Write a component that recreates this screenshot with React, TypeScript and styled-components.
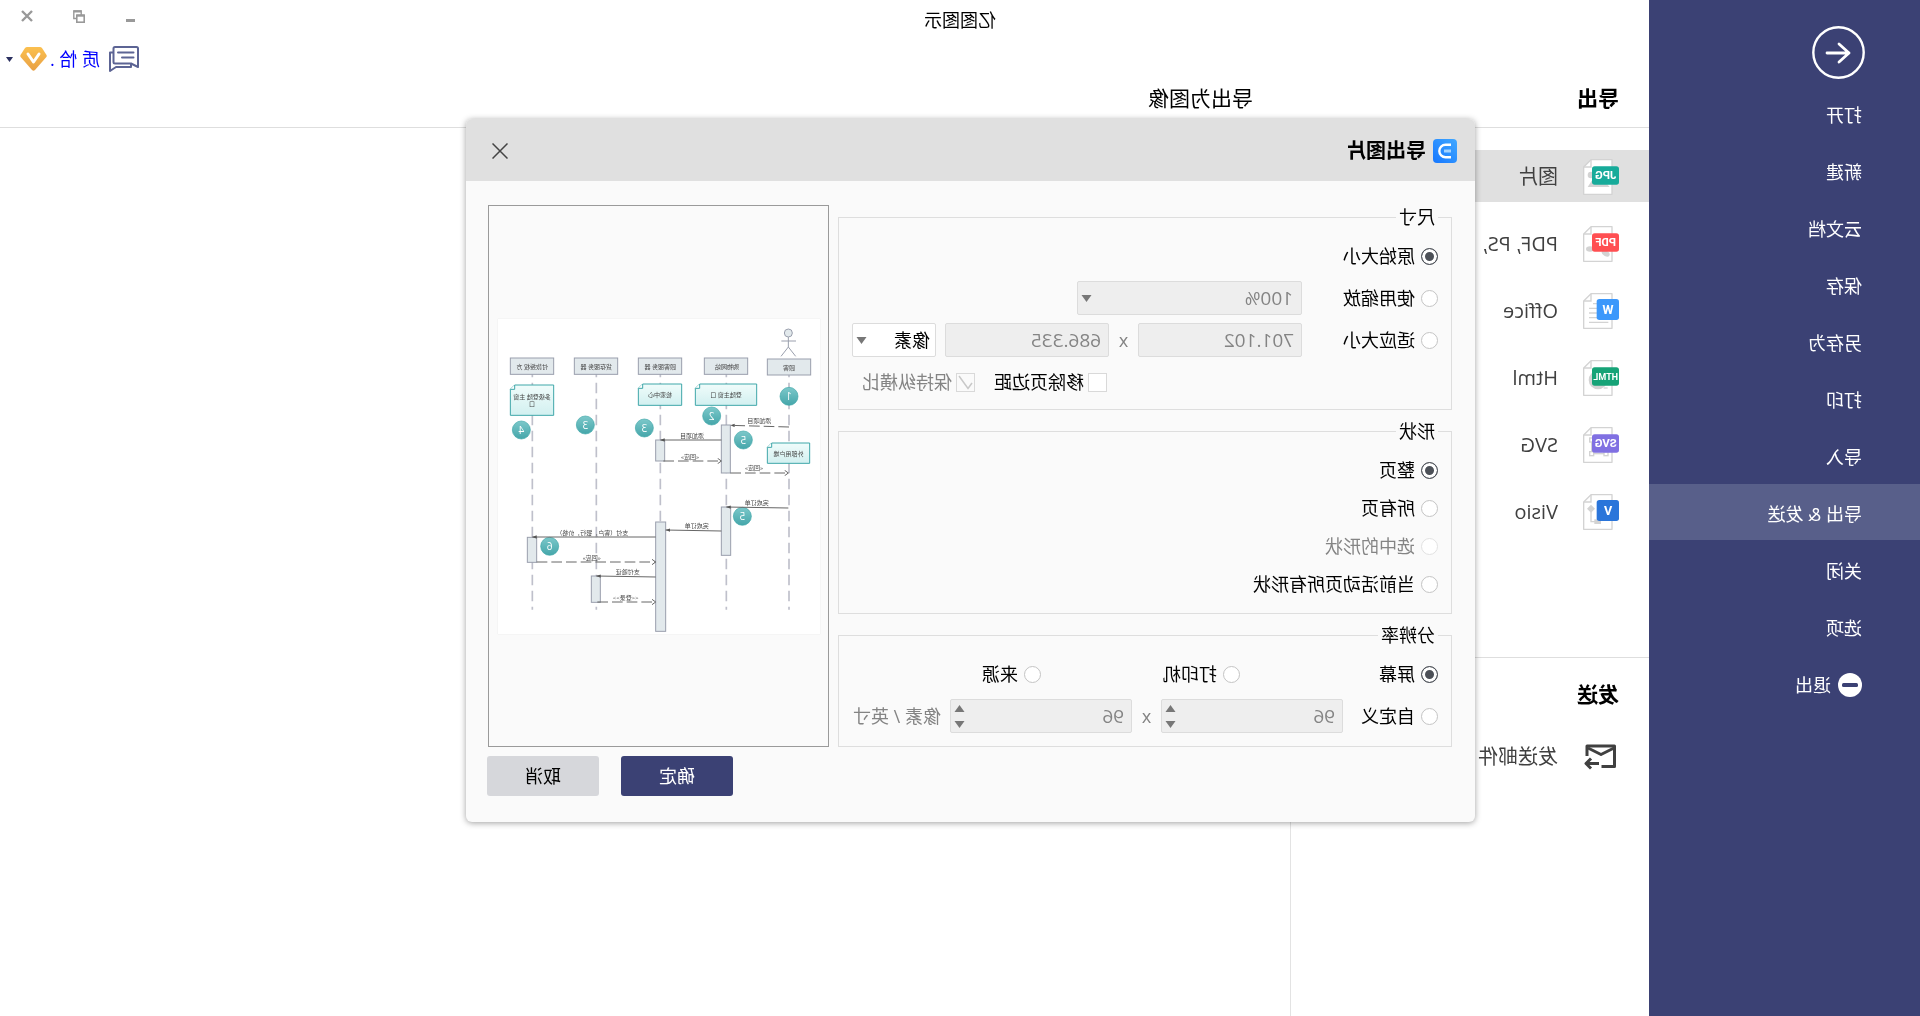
import React from "react";
import styled, { createGlobalStyle } from "styled-components";

const sans = `"Open Sans", "Noto Sans CJK SC", sans-serif`;

const Global = createGlobalStyle`
  * { box-sizing: border-box; }
  body { margin: 0; background: #fff; font-family: ${sans}; font-size: 18px; line-height: 24px; color: #000; }
  button, input, select { font: inherit; color: inherit; margin: 0; }
  button { border: 0; padding: 0; background: none; cursor: pointer; }
  h1, h2, p { margin: 0; font-size: inherit; font-weight: inherit; }
  svg { display: block; flex: none; }
`;

/* The whole window is shown as a mirror image. */
const Window = styled.div`
  position: relative;
  display: flex;
  min-height: 100vh;
  overflow: hidden;
  transform: scaleX(-1);
`;

/* ---------- sidebar ---------- */
const Sidebar = styled.nav`
  flex: none;
  width: 271px;
  background: #3b4174;
  color: #fff;
`;
const BackButton = styled.button`
  display: block;
  margin: 26px 0 6px 55px;
  color: #fff;
`;
const MenuItem = styled.a<{ $active?: boolean }>`
  display: flex;
  align-items: center;
  gap: 7px;
  height: 56px;
  margin-bottom: 1px;
  padding: 4px 0 0 58px;
  color: #fff;
  text-decoration: none;
  background: ${(p) => (p.$active ? "#585f8a" : "transparent")};
`;

/* ---------- main area ---------- */
const Main = styled.main`
  flex: 1;
  min-width: 0;
  display: flex;
  flex-direction: column;
`;
const TopBar = styled.header`
  display: flex;
  height: 78px;
`;
const AppTitle = styled.h1`
  flex: 1;
  padding: 8px 121px 0 0;
  text-align: center;
`;
const Tools = styled.div`
  width: 150px;
  display: flex;
  flex-direction: column;
  gap: 12px;
`;
const WindowButtons = styled.div`
  display: flex;
  justify-content: space-between;
  height: 32px;
  padding: 0 18px 0 10px;
  color: #999;
`;
const IconButton = styled.button`
  display: flex;
  align-items: center;
  justify-content: center;
  width: 18px;
  color: inherit;
`;
const Account = styled.div`
  display: flex;
  align-items: center;
  height: 30px;
  padding: 0 6px 0 11px;
`;
const AccountLink = styled.a`
  flex: 1;
  min-width: 0;
  padding-left: 9px;
  color: #0000ff;
  text-decoration: none;
  white-space: nowrap;
`;
const VipMark = styled.span`
  margin-right: 7px;
`;
const Headings = styled.div`
  display: flex;
  height: 50px;
  padding: 6px 0 0 30px;
  border-bottom: 1px solid #dedede;
  font-size: 21px;
  line-height: 28px;
`;
const ColumnTitle = styled.h2<{ $bold?: boolean }>`
  width: 366px;
  font-weight: ${(p) => (p.$bold ? 700 : 400)};
`;
const Content = styled.div`
  flex: 1;
  display: flex;
`;
const Formats = styled.section`
  width: 359px;
  border-right: 1px solid #e3e3e3;
  padding-top: 22px;
`;
const FormatItem = styled.a<{ $active?: boolean }>`
  display: flex;
  align-items: center;
  gap: 25px;
  height: 52px;
  margin-bottom: 15px;
  padding: 1px 0 0 30px;
  font-size: 20px;
  color: #404040;
  text-decoration: none;
  white-space: nowrap;
  background: ${(p) => (p.$active ? "#e0e0e0" : "transparent")};
`;
const SendGroup = styled.div`
  margin-top: 120px;
  border-top: 1px solid #dedede;
`;
const SendTitle = styled.h2`
  padding: 22px 0 22px 30px;
  font-size: 21px;
  line-height: 28px;
  font-weight: 700;
`;

/* ---------- dialog ---------- */
const Overlay = styled.div`
  position: absolute;
  inset: 0;
  display: flex;
  justify-content: center;
  align-items: flex-start;
  padding: 119px 21px 0 0;
`;
const Dialog = styled.section`
  width: 1009px;
  border-radius: 6px;
  background: #fafafa;
  box-shadow: 0 1px 6px rgba(0, 0, 0, 0.38);
`;
const DialogHead = styled.header`
  display: flex;
  align-items: center;
  gap: 7px;
  height: 62px;
  padding: 1px 25px 0 18px;
  border-radius: 6px 6px 0 0;
  background: #e0e0e0;
`;
const DialogTitle = styled.h2`
  flex: 1;
  font-size: 20px;
  font-weight: 700;
`;
const Body = styled.div`
  display: flex;
  gap: 9px;
  padding: 24px 22px 0 23px;
`;
const Groups = styled.div`
  flex: 1;
  display: flex;
  flex-direction: column;
  gap: 9px;
`;
const Group = styled.fieldset<{ $gap: number; $bottom: number }>`
  margin: 0;
  min-width: 0;
  border: 1px solid #dedede;
  padding: 10px 13px ${(p) => p.$bottom}px;
  display: flex;
  flex-direction: column;
  gap: ${(p) => p.$gap}px;
`;
const Legend = styled.legend`
  padding: 0 3px;
`;
const Row = styled.div<{ $indent?: number }>`
  display: flex;
  align-items: center;
  height: 34px;
  padding-left: ${(p) => p.$indent ?? 0}px;
`;
const Choice = styled.label<{ $width?: number; $off?: boolean }>`
  display: flex;
  align-items: center;
  gap: 6px;
  flex: none;
  width: ${(p) => (p.$width ? `${p.$width}px` : "auto")};
  color: ${(p) => (p.$off ? "#848484" : "#000")};
  white-space: nowrap;
`;
const Radio = styled.input`
  appearance: none;
  flex: none;
  width: 17px;
  height: 17px;
  border: 1px solid #c4c4c4;
  border-radius: 50%;
  background: #fff;
  &:checked {
    border-color: #4d5158;
    background: #4d5158;
    box-shadow: inset 0 0 0 3px #fff;
  }
  &:disabled { border-color: #e2e2e2; }
`;
const CheckHolder = styled.span`
  display: grid;
  margin-right: -2px;
  > * { grid-area: 1 / 1; }
  > svg { pointer-events: none; }
`;
const Check = styled.input`
  appearance: none;
  width: 19px;
  height: 19px;
  border: 1px solid #d9d9d9;
  background: #fff;
  &:disabled { background: #fafafa; }
`;
const Field = styled.div<{ $width: number }>`
  display: grid;
  align-items: center;
  width: ${(p) => p.$width}px;
  height: 34px;
  > * { grid-area: 1 / 1; }
`;
const control = `
  appearance: none;
  width: 100%;
  height: 34px;
  min-width: 0;
  border: 1px solid #dcdcdc;
  border-radius: 2px;
  background: #fff;
  opacity: 1;
`;
const Picker = styled.select`
  ${control}
  padding: 0 24px 0 5px;
  &:disabled { background: #eee; color: #848484; font-size: 19px; padding-left: 8px; }
`;
const TextBox = styled.input`
  ${control}
  padding: 0 24px 0 7px;
  font-size: 19px;
  &:disabled { background: #eee; color: #848484; }
  &::-webkit-inner-spin-button { display: none; }
`;
const Arrows = styled.span`
  justify-self: end;
  display: flex;
  flex-direction: column;
  gap: 9px;
  margin-right: 4px;
  pointer-events: none;
`;
const Times = styled.span<{ $width: number }>`
  width: ${(p) => p.$width}px;
  text-align: center;
  color: #848484;
`;
const Unit = styled.span`
  margin-left: 9px;
  color: #848484;
`;
const UnitHolder = styled.div`
  margin-left: 9px;
`;
const Preview = styled.div`
  flex: none;
  width: 341px;
  display: flex;
  align-items: center;
  justify-content: center;
  padding-right: 2px;
  border: 1px solid #9a9a9a;
`;
const Paper = styled.svg`
  width: 322px;
  height: 315px;
  background: #fff;
  box-shadow: 0 0 1px #ddd;
`;
const Footer = styled.footer`
  display: flex;
  justify-content: flex-end;
  gap: 22px;
  padding: 9px 21px 26px;
`;
const Button = styled.button<{ $primary?: boolean }>`
  width: 112px;
  height: 40px;
  border-radius: 3px;
  background: ${(p) => (p.$primary ? "#3b4174" : "#d6d7db")};
  color: ${(p) => (p.$primary ? "#fff" : "#000")};
`;

/* ---------- drawings ---------- */
const Triangle = ({ up = false, color = "#777" }) => (
  <svg width="11" height="7" viewBox="0 0 11 7">
    <path d={up ? "M0.5 7 L5.5 0 L10.5 7 Z" : "M0.5 0 L5.5 7 L10.5 0 Z"} fill={color} />
  </svg>
);

type Format = { name: string; badge: string; color: string; wide: boolean; art: React.ReactNode };

const FileIcon = ({ badge, color, wide, art }: Format) => (
  <svg width="36" height="36" viewBox="0 0 108 108">
    <path d="M21 2 H84 L106 24 V106 H21 Z" fill="#fff" stroke="#d3d3d3" strokeWidth="4" strokeLinejoin="round" />
    <path d="M84 3 V24 H105" fill="none" stroke="#d3d3d3" strokeWidth="4" />
    {art}
    <rect x="0" y={wide ? 22 : 18} width={wide ? 81 : 67} height={wide ? 55 : 63} rx="8" fill={color} />
    <text
      x={wide ? 40 : 33}
      y={wide ? (badge.length > 3 ? 59 : 61) : 63}
      textAnchor="middle"
      fontFamily="Roboto, sans-serif"
      fontWeight="700"
      fontSize={wide ? (badge.length > 3 ? 27 : 34) : 38}
      fill="#fff"
    >
      {badge}
    </text>
  </svg>
);

const formats: Format[] = [
  {
    name: "图片", badge: "JPG", color: "#17ab9a", wide: true,
    art: <g fill="#d3d3d3"><circle cx="84" cy="48" r="10" /><path d="M28 84 L55 52 L72 70 L80 62 L94 84 Z" /></g>,
  },
  {
    name: "PDF, PS,", badge: "PDF", color: "#ff4f52", wide: true,
    art: <g fill="#d3d3d3"><ellipse cx="87" cy="69" rx="12" ry="8" /><ellipse cx="40" cy="82" rx="13" ry="8" transform="rotate(-30 40 82)" /></g>,
  },
  {
    name: "Office", badge: "W", color: "#3c98fb", wide: false,
    art: <path d="M32 88 H90 M32 74 H90 M50 60 H90 M50 46 H90 M50 32 H78" stroke="#d3d3d3" strokeWidth="4" />,
  },
  {
    name: "Html", badge: "HTML", color: "#16a377", wide: true,
    art: <g><circle cx="63" cy="60" r="28" fill="#d3d3d3" /><path d="M34 84 H46" stroke="#d3d3d3" strokeWidth="4" /></g>,
  },
  {
    name: "SVG", badge: "SVG", color: "#8070e2", wide: true,
    art: <g fill="none" stroke="#d3d3d3" strokeWidth="4"><rect x="36" y="38" width="46" height="42" /><rect x="76" y="33" width="12" height="12" fill="#fff" /><rect x="76" y="74" width="12" height="12" fill="#fff" /><rect x="33" y="74" width="12" height="12" fill="#fff" /></g>,
  },
  {
    name: "Visio", badge: "V", color: "#2a75da", wide: false,
    art: <g fill="#d3d3d3"><path d="M84 32 L96 44 L84 56 L72 44 Z" /><rect x="54" y="76" width="20" height="14" /><path d="M84 50 V83 H70" fill="none" stroke="#d3d3d3" strokeWidth="4" /></g>,
  },
];

const Label = styled.text`
  font-family: ${sans};
  font-size: 18px;
  font-variant-ligatures: none;
  text-anchor: middle;
  fill: #444;
`;
const Box = ({ x, y, w, h }: { x: number; y: number; w: number; h: number }) => (
  <rect x={x} y={y} width={w} height={h} fill="#e2e9ec" stroke="#9a9fad" strokeWidth="3" />
);
const Words = ({ x, y, children }: { x: number; y: number; children: string }) => (
  <Label x={x} y={y + 7}>{children}</Label>
);
const Note = ({ x, y, w, h, lines }: { x: number; y: number; w: number; h: number; lines: string[] }) => (
  <g>
    <path d={`M${x} ${y} H${x + w - 13} L${x + w} ${y + 13} V${y + h} H${x} Z`} fill="url(#note)" stroke="#3fa7a9" strokeWidth="3" />
    <path d={`M${x + w - 13} ${y} V${y + 13} H${x + w}`} fill="#fff" stroke="#3fa7a9" strokeWidth="3" />
    {lines.map((line, i) => (
      <Words key={line} x={x + w / 2} y={y + h / 2 + (i - (lines.length - 1) / 2) * 20}>{line}</Words>
    ))}
  </g>
);
const Step = ({ x, y, n }: { x: number; y: number; n: number }) => (
  <g>
    <circle cx={x} cy={y} r="27" fill="url(#step)" stroke="#3fa7a9" strokeWidth="2" />
    <text x={x} y={y + 11} fontSize="30" textAnchor="middle" fill="#fff" fontFamily={sans}>{n}</text>
  </g>
);
const Call = ({ x1, y1, x2, y2, dashed = false }: { x1: number; y1: number; x2: number; y2: number; dashed?: boolean }) => (
  <line x1={x1} y1={y1} x2={x2} y2={y2} stroke="#666" strokeWidth="3" strokeDasharray={dashed ? "32 12" : undefined} markerEnd="url(#solid)" />
);
const Reply = ({ x1, x2, y }: { x1: number; x2: number; y: number }) => (
  <line x1={x1} y1={y} x2={x2} y2={y} stroke="#666" strokeWidth="3" strokeDasharray="32 12" markerEnd="url(#open)" />
);

const Diagram = () => (
  <Paper viewBox="0 0 966 945" role="img" aria-label="时序图">
    <defs>
      <linearGradient id="note" x1="0" y1="0" x2="0" y2="1"><stop offset="0" stopColor="#f0fcfb" /><stop offset="1" stopColor="#d2f0f0" /></linearGradient>
      <linearGradient id="step" x1="0" y1="0" x2="0" y2="1"><stop offset="0" stopColor="#7cc8ca" /><stop offset="1" stopColor="#45a6aa" /></linearGradient>
      <marker id="solid" markerUnits="userSpaceOnUse" markerWidth="14" markerHeight="12" refX="13" refY="6" orient="auto"><path d="M0 1 L13 6 L0 11 Z" fill="#555" /></marker>
      <marker id="open" markerUnits="userSpaceOnUse" markerWidth="16" markerHeight="20" refX="13" refY="10" orient="auto"><path d="M2 2 L13 10 L2 18" fill="none" stroke="#666" strokeWidth="3" /></marker>
    </defs>
    {[93, 281, 479, 671, 863].map((x) => (
      <line key={x} x1={x} x2={x} y1="143" y2="872" stroke="#bfc0cb" strokeWidth="5" strokeDasharray="32 16" />
    ))}
    <g fill="none" stroke="#9a9fad" strokeWidth="3">
      <circle cx="95" cy="42" r="12" fill="#e2e9ec" />
      <path d="M95 54 V84 M72 66 H116 M95 84 L73 112 M95 84 L117 112" />
    </g>
    <Box x={28} y={120} w={130} h={48} /><Words x={93} y={146}>顾客</Words>
    <Box x={217} y={117} w={130} h={49} /><Words x={279} y={143}>购物网站</Words>
    <Box x={415} y={117} w={130} h={49} /><Words x={479} y={143}>顾客服务 器</Words>
    <Box x={607} y={117} w={130} h={49} /><Words x={671} y={143}>货存服务 器</Words>
    <Box x={799} y={117} w={130} h={49} /><Words x={863} y={143}>付款授权 方</Words>
    <Box x={269} y={318} w={27} h={144} />
    <Box x={466} y={363} w={27} h={63} />
    <Box x={268} y={564} w={28} h={145} />
    <Box x={463} y={609} w={30} h={328} />
    <Box x={850} y={655} w={28} h={75} />
    <Box x={659} y={771} w={27} h={79} />
    <Note x={190} y={195} w={184} h={64} lines={["登陆主窗 口"]} />
    <Note x={415} y={195} w={130} h={64} lines={["检索中心"]} />
    <Note x={799} y={198} w={130} h={91} lines={["多级登陆 主窗", "口"]} />
    <Note x={31} y={372} w={127} h={61} lines={["外部用户端"]} />
    <Step x={93} y={232} n={1} />
    <Step x={325} y={291} n={2} />
    <Step x={230} y={363} n={5} />
    <Step x={527} y={327} n={3} />
    <Step x={704} y={318} n={3} />
    <Step x={896} y={333} n={4} />
    <Step x={233} y={592} n={5} />
    <Step x={811} y={682} n={6} />
    <Call x1={93} y1={324} x2={269} y2={319} dashed />
    <Call x1={296} y1={363} x2={479} y2={363} />
    <Reply x1={470} x2={296} y={426} />
    <Reply x1={269} x2={95} y={462} />
    <Call x1={95} y1={567} x2={281} y2={564} />
    <Call x1={296} y1={636} x2={463} y2={633} />
    <Call x1={493} y1={654} x2={863} y2={654} />
    <Reply x1={850} x2={493} y={729} />
    <Call x1={493} y1={774} x2={671} y2={771} />
    <Reply x1={668} x2={493} y={849} />
    <Words x={182} y={304}>添加项目</Words>
    <Words x={384} y={349}>添加项目</Words>
    <Words x={390} y={413}>«回应»</Words>
    <Words x={198} y={446}>«回应»</Words>
    <Words x={190} y={551}>完成订单</Words>
    <Words x={370} y={620}>完成订单</Words>
    <Words x={683} y={640}>支付（客户，银行，价格）</Words>
    <Words x={685} y={717}>«回应»</Words>
    <Words x={577} y={757}>支付验证</Words>
    <Words x={583} y={835}>{"<<登录>>"}</Words>
  </Paper>
);

const menu = ["打开", "新建", "云文档", "保存", "另存为", "打印", "导入", "导出 & 发送", "关闭", "选项"];

export default function App() {
  return (
    <>
      <Global />
      <Window>
        <Sidebar>
          <BackButton aria-label="返回">
            <svg width="53" height="53" viewBox="0 0 53 53" fill="none" stroke="currentColor" strokeLinecap="round" strokeLinejoin="round">
              <circle cx="26.5" cy="26.5" r="25.2" strokeWidth="2.4" />
              <path d="M38 27 H16 M26 18 L16 27 L26 36" strokeWidth="2.8" />
            </svg>
          </BackButton>
          {menu.map((name) => (
            <MenuItem key={name} href="#" $active={name.includes("&")}>{name}</MenuItem>
          ))}
          <MenuItem href="#">
            <svg width="24" height="24" viewBox="0 0 24 24">
              <circle cx="12" cy="12" r="12" fill="#fff" />
              <rect x="4" y="10" width="16" height="4" rx="1.5" fill="#3b4174" />
            </svg>
            退出
          </MenuItem>
        </Sidebar>

        <Main>
          <TopBar>
            <AppTitle>亿图图示</AppTitle>
            <Tools>
              <WindowButtons>
                <IconButton aria-label="最小化">
                  <svg width="9" height="13" viewBox="0 0 9 13"><rect y="9" width="9" height="3" fill="currentColor" /></svg>
                </IconButton>
                <IconButton aria-label="还原">
                  <svg width="12" height="13" viewBox="0 0 12 13" fill="none" stroke="currentColor">
                    <path d="M3.5 8.5 H11.2 V1 H3.8 V5" strokeWidth="1.4" />
                    <path d="M3.5 1.4 H11.5" strokeWidth="2.2" />
                    <rect x="0.8" y="5.2" width="7.4" height="7" strokeWidth="1.6" fill="#fff" />
                    <path d="M0.5 5.6 H8.5" strokeWidth="2.2" />
                  </svg>
                </IconButton>
                <IconButton aria-label="关闭窗口">
                  <svg width="12" height="12" viewBox="0 0 12 12" stroke="currentColor" strokeWidth="2.4"><path d="M1 1 L11 11 M11 1 L1 11" /></svg>
                </IconButton>
              </WindowButtons>
              <Account>
                <svg width="30" height="26" viewBox="0 0 30 26" fill="none" stroke="#5c6494" strokeWidth="2" strokeLinejoin="round" strokeLinecap="round">
                  <path d="M2.5 1 H24 a1.5 1.5 0 0 1 1.5 1.5 V16 a1.5 1.5 0 0 1 -1.5 1.5 H8 L1 21 V2.5 A1.5 1.5 0 0 1 2.5 1 Z" />
                  <path d="M26 6.5 H29 V25 L23 21 H8 V18 M5.5 6.5 H21 M5.5 11.5 H17" />
                </svg>
                <AccountLink href="#">质 恰 .</AccountLink>
                <VipMark>
                  <svg width="27" height="24" viewBox="0 0 27 24">
                    <defs><linearGradient id="vip" x1="0" y1="0" x2="0" y2="1"><stop offset="0" stopColor="#fbc04f" /><stop offset="1" stopColor="#e8a045" /></linearGradient></defs>
                    <path d="M7 0 H20 Q21 0 22 1 L26.5 8 Q27 9 26.4 10 L15 23 Q13.5 24.6 12 23 L0.6 10 Q0 9 0.5 8 L5 1 Q6 0 7 0 Z" fill="url(#vip)" />
                    <path d="M8 7 L13.5 15 L19 7" fill="none" stroke="#fff" strokeWidth="3" strokeLinecap="round" strokeLinejoin="round" />
                  </svg>
                </VipMark>
                <svg width="7" height="5" viewBox="0 0 7 5"><path d="M0 0 H7 L3.5 5 Z" fill="#2b3060" /></svg>
              </Account>
            </Tools>
          </TopBar>
          <Headings>
            <ColumnTitle $bold>导出</ColumnTitle>
            <ColumnTitle>导出为图像</ColumnTitle>
          </Headings>
          <Content>
            <Formats>
              {formats.map((f, i) => (
                <FormatItem key={f.name} href="#" $active={i === 0}>
                  <FileIcon {...f} />
                  {f.name}
                </FormatItem>
              ))}
              <SendGroup>
                <SendTitle>发送</SendTitle>
                <FormatItem href="#">
                  <svg width="36" height="26" viewBox="0 0 36 26" fill="none" stroke="#404040" strokeWidth="3" strokeLinejoin="round">
                    <path d="M17.5 22.5 H4.5 V2 H32 V12" />
                    <path d="M5 4 L18 10.5 L31 4" />
                    <path d="M20 19.5 H32 M28 14.5 L33 19.5 L28 24.5" />
                  </svg>
                  发送邮件
                </FormatItem>
              </SendGroup>
            </Formats>
          </Content>
        </Main>

        <Overlay>
          <Dialog role="dialog" aria-label="导出图片">
            <DialogHead>
              <svg width="24" height="24" viewBox="0 0 24 24">
                <defs><linearGradient id="logo" x1="0" y1="0" x2="1" y2="1"><stop offset="0" stopColor="#41a8ff" /><stop offset="1" stopColor="#1677ff" /></linearGradient></defs>
                <rect width="24" height="24" rx="4" fill="url(#logo)" />
                <path d="M6 5.8 H11.5 A6.2 6.2 0 0 1 11.5 18.2 H6" fill="none" stroke="#fff" strokeWidth="2.4" />
                <path d="M6 12 H13" stroke="#a5d4ff" strokeWidth="3" />
              </svg>
              <DialogTitle>导出图片</DialogTitle>
              <IconButton aria-label="关闭">
                <svg width="16" height="16" viewBox="0 0 16 16" stroke="#444" strokeWidth="1.5"><path d="M0.5 0.5 L15.5 15.5 M15.5 0.5 L0.5 15.5" /></svg>
              </IconButton>
            </DialogHead>

            <Body>
              <Groups>
                <Group $gap={8} $bottom={10}>
                  <Legend>尺寸</Legend>
                  <Row><Choice><Radio type="radio" name="size" defaultChecked />原始大小</Choice></Row>
                  <Row>
                    <Choice $width={136}><Radio type="radio" name="size" />使用缩放</Choice>
                    <Field $width={225}>
                      <Picker disabled aria-label="缩放比例"><option>100%</option></Picker>
                      <Arrows><Triangle /></Arrows>
                    </Field>
                  </Row>
                  <Row>
                    <Choice $width={136}><Radio type="radio" name="size" />适应大小</Choice>
                    <Field $width={164}><TextBox disabled defaultValue="701.102" aria-label="宽度" /></Field>
                    <Times $width={29}>x</Times>
                    <Field $width={164}><TextBox disabled defaultValue="686.335" aria-label="高度" /></Field>
                    <UnitHolder>
                      <Field $width={84}>
                        <Picker aria-label="单位"><option>像素</option></Picker>
                        <Arrows><Triangle /></Arrows>
                      </Field>
                    </UnitHolder>
                  </Row>
                  <Row $indent={331}>
                    <Choice $width={132}>
                      <CheckHolder><Check type="checkbox" /></CheckHolder>
                      移除页边距
                    </Choice>
                    <Choice $off>
                      <CheckHolder>
                        <Check type="checkbox" disabled defaultChecked />
                        <svg width="19" height="19" viewBox="0 0 19 19" fill="none" stroke="#c8c8c8" strokeWidth="1.5"><path d="M3 10 L7 15.5 L16 3" /></svg>
                      </CheckHolder>
                      保持纵横比
                    </Choice>
                  </Row>
                </Group>

                <Group $gap={4} $bottom={12}>
                  <Legend>形状</Legend>
                  <Row><Choice><Radio type="radio" name="shape" defaultChecked />整页</Choice></Row>
                  <Row><Choice><Radio type="radio" name="shape" />所有页</Choice></Row>
                  <Row><Choice $off><Radio type="radio" name="shape" disabled />选中的形状</Choice></Row>
                  <Row><Choice><Radio type="radio" name="shape" />当前活动页所有形状</Choice></Row>
                </Group>

                <Group $gap={8} $bottom={13}>
                  <Legend>分辨率</Legend>
                  <Row>
                    <Choice $width={198}><Radio type="radio" name="dpi" defaultChecked />屏幕</Choice>
                    <Choice $width={199}><Radio type="radio" name="dpi" />打印机</Choice>
                    <Choice><Radio type="radio" name="dpi" />来源</Choice>
                  </Row>
                  <Row>
                    <Choice $width={95}><Radio type="radio" name="dpi" />自定义</Choice>
                    <Field $width={182}>
                      <TextBox type="number" disabled defaultValue={96} aria-label="水平分辨率" />
                      <Arrows><Triangle up /><Triangle /></Arrows>
                    </Field>
                    <Times $width={29}>x</Times>
                    <Field $width={182}>
                      <TextBox type="number" disabled defaultValue={96} aria-label="垂直分辨率" />
                      <Arrows><Triangle up /><Triangle /></Arrows>
                    </Field>
                    <Unit>像素 / 英寸</Unit>
                  </Row>
                </Group>
              </Groups>
              <Preview><Diagram /></Preview>
            </Body>

            <Footer>
              <Button $primary>确定</Button>
              <Button>取消</Button>
            </Footer>
          </Dialog>
        </Overlay>
      </Window>
    </>
  );
}
